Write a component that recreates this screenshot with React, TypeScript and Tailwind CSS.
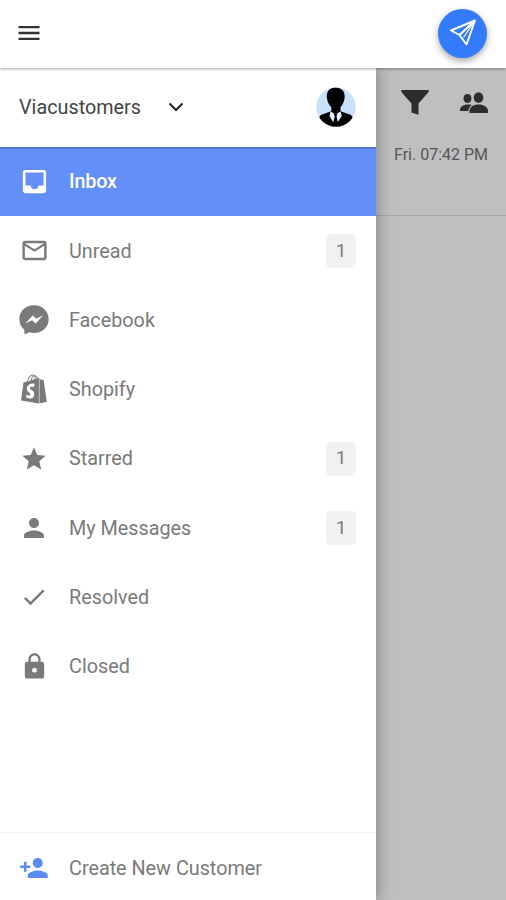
import { ReactNode } from "react";
import { FaShopify } from "react-icons/fa";
import {
  MdCheck,
  MdInbox,
  MdLock,
  MdMailOutline,
  MdMenu,
  MdPerson,
  MdPersonAdd,
  MdStar,
} from "react-icons/md";

interface MenuItem {
  label: string;
  icon: ReactNode;
  count?: number;
  active?: boolean;
}

const MessengerIcon = () => (
  <svg className="h-[30px] w-[30px]" viewBox="0 0 30 30" fill="currentColor">
    <path
      fillRule="evenodd"
      d="M15 .3C6.700.3.3 6.400.3 14.200c0 4.200 1.800 7.700 4.900 10.200l.4 5.200 4.600-2.400c1.500.5 3.100.7 4.800.7 8.200 0 14.700-6 14.700-13.700S23.200.3 15 .3zM6.300 18.600l7.400-8.200 3.700 3.300 6.800-3.400-7.500 8.300-3.600-3.300z"
    />
  </svg>
);

const Avatar = () => (
  <svg className="h-10 w-10" viewBox="0 0 40 40">
    <defs>
      <clipPath id="avatar">
        <circle cx="20" cy="20" r="19.700" />
      </clipPath>
    </defs>
    <g clipPath="url(#avatar)">
      <rect width="40" height="40" fill="#c9e0fb" />
      <path
        d="M19.500.5c-5.500 0-9 3.800-8.700 9.500.2 3.800 1.800 7.300 4.500 10.200v4L6 27.500c-1.500.6-2.500 1.800-3 3.500L1 40h38l-2.200-9c-.5-1.700-1.400-2.900-2.900-3.500l-9.400-3.300v-4c2.500-2.900 4-6.300 4.200-10.200.3-5.700-3.500-9.500-9.200-9.500z"
        fill="#000"
      />
      <path d="M14.500 24.500l5 2.800 5-2.800 1.300 4.500-3.900 6h-4.800L13.500 29z" fill="#e3effc" />
      <path d="M17.600 26.500h3.800l-.9 3 1.400 5.500-2.200 1-2.300-1 1.300-5.500z" fill="#000" />
    </g>
  </svg>
);

const menuItems: MenuItem[] = [
  { label: "Inbox", icon: <MdInbox className="size-[31px]" />, active: true },
  { label: "Unread", icon: <MdMailOutline className="size-[29px]" />, count: 1 },
  { label: "Facebook", icon: <MessengerIcon /> },
  { label: "Shopify", icon: <FaShopify className="size-[30px]" /> },
  { label: "Starred", icon: <MdStar className="size-7" />, count: 1 },
  { label: "My Messages", icon: <MdPerson className="size-[30px]" />, count: 1 },
  { label: "Resolved", icon: <MdCheck className="size-7" /> },
  { label: "Closed", icon: <MdLock className="size-[29px]" /> },
];

const MenuRow = ({ label, icon, count, active }: MenuItem) => (
  <li
    className={
      active
        ? "flex h-[69.250px] items-center border-t-2 border-[#5277d2] bg-[#628ff8] pb-[3px] pl-[18px] pr-5 text-white"
        : "flex h-[69.250px] items-center pl-[18px] pr-5 text-[#7a7a7a]"
    }
  >
    <span className="flex w-8 shrink-0 justify-center">{icon}</span>
    <span
      className={
        active ? "ml-[19px] pt-[2px] font-medium tracking-[-0.2px]" : "ml-[19px] pt-px"
      }
    >
      {label}
    </span>
    {count !== undefined && (
      <span className="ml-auto flex h-[34px] w-[30px] items-center justify-center rounded-[5px] bg-[#f1f1f1] text-[19px] text-[#7d7d7d]">
        {count}
      </span>
    )}
  </li>
);

const Header = () => (
  <header className="relative z-20 flex h-[68px] shrink-0 items-center justify-between bg-white pb-[2px] pl-[15px] pr-[19px] shadow-[0_1px_3px_rgba(0,0,0,0.35)]">
    <MdMenu className="size-7 text-[#333]" />
    <button className="flex size-[49px] items-center justify-center rounded-full bg-[#347bfb] text-white shadow-[0_3px_7px_rgba(0,0,0,0.35)]">
      <svg
        className="size-[30px]"
        viewBox="0 0 30 30"
        fill="none"
        stroke="currentColor"
        strokeWidth="1.900"
        strokeLinejoin="round"
      >
        <path d="M27 2.500L3 12.500l8.500 4.500 7 9.500zM27 2.500L11.500 17" />
        <path d="M26 4L15.500 19.500" strokeWidth="1.200" />
      </svg>
    </button>
  </header>
);

const Drawer = () => (
  <aside className="relative z-10 flex w-[376px] shrink-0 flex-col bg-white shadow-[2px_0_14px_rgba(0,0,0,0.3)]">
    <div className="flex h-[79px] shrink-0 items-center pb-[2px] pl-[19px] pr-5">
      <span className="pt-[2px] text-[#444]">Viacustomers</span>
      <svg
        className="ml-[27px] h-4 w-4"
        viewBox="0 0 16 16"
        fill="none"
        stroke="#222"
        strokeWidth="2"
      >
        <path d="M1.500 4.500L8 11l6.500-6.500" />
      </svg>
      <span className="ml-auto">
        <Avatar />
      </span>
    </div>
    <ul>
      {menuItems.map((item) => (
        <MenuRow key={item.label} {...item} />
      ))}
    </ul>
    <div className="mt-auto flex h-[68px] items-center border-t-2 border-[#f5f5f5] pl-[18px] pt-px text-[#7a7a7a]">
      <span className="flex w-8 justify-center">
        <MdPersonAdd className="size-[30px] text-[#5a8bf5]" />
      </span>
      <span className="ml-[19px] pt-[2px]">Create New Customer</span>
    </div>
  </aside>
);

const Conversations = () => (
  <main className="flex-1 bg-[#bfbfbf]">
    <div className="flex h-[148px] flex-col border-b border-[#a9a9a9] pl-[18px] pr-[17px]">
      <div className="flex h-[70px] items-center justify-between pl-[7px]">
        <svg className="h-[26px] w-7" viewBox="0 0 28 26" fill="#2d2d2d">
          <path d="M1 0h26c1 0 1 1.500.4 2.200L17.500 13.500v11.300l-7-2.300v-9L.6 2.200C0 1.500 0 0 1 0z" />
        </svg>
        <svg className="mr-px h-[22px] w-7" viewBox="0 0 28 22" fill="#2d2d2d">
          <ellipse cx="18.500" cy="5.500" rx="4.800" ry="5.300" />
          <ellipse cx="7.500" cy="6.500" rx="4" ry="4.500" />
          <path d="M18.500 12.500c-5 0-9 2.500-9 6.500V21H28v-2c0-4-4.500-6.500-9.500-6.500z" />
          <path d="M7.500 12.500C3.500 12.500 0 14.800 0 18v1h8.300c.2-2.500 1.500-4.500 3.500-6-1.300-.4-2.800-.5-4.300-.5z" />
        </svg>
      </div>
      <span className="mt-[7px] whitespace-nowrap text-base leading-5 text-[#555]">
        Fri. 07:42 PM
      </span>
    </div>
  </main>
);

const App = () => {
  return (
    <div className="flex h-[900px] w-[506px] flex-col overflow-hidden bg-white font-[Roboto,sans-serif] text-[19.800px]">
      <Header />
      <div className="flex min-h-0 flex-1">
        <Drawer />
        <Conversations />
      </div>
    </div>
  );
};

export default App;
